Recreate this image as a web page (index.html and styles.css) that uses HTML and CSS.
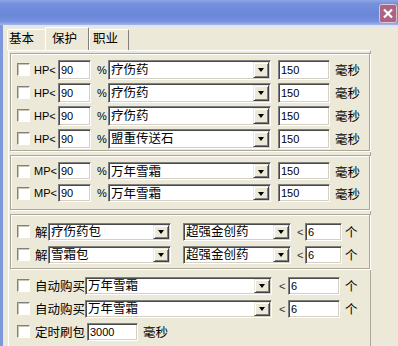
FILE: index.html
```html
<!DOCTYPE html>
<html lang="zh-CN">
<head>
  <meta charset="UTF-8">
  <meta name="viewport" content="width=device-width, initial-scale=1.0">
  <title>保护</title>
  <link rel="stylesheet" href="styles.css">
</head>
<body>
  <div class="window">
    <div class="titlebar">
      <span class="close">
        <svg width="18" height="19" viewBox="0 0 18 19">
          <rect x="0.5" y="0.5" width="17" height="18" rx="2" fill="#ab6483" stroke="#dcc6d3"/>
          <path d="M5 5.5 L13 13.5 M13 5.5 L5 13.5" stroke="#fff" stroke-width="2.2"/>
        </svg>
      </span>
    </div>
    <div class="frame">
      <div class="tabs">
        <span class="tab tab-first">基本</span>
        <span class="tab active">保护</span>
        <span class="tab tab-last">职业</span>
      </div>
      <div class="page">
        <!-- HP -->
        <div class="group hp">
          <div class="row"><span class="check"></span><span class="lbl">HP&lt;</span><span class="edit w-pct">90</span><span class="pct">%</span><span class="combo w-item"><span class="val">疗伤药</span><span class="drop"></span></span><span class="edit w-ms">150</span><span class="unit">毫秒</span></div>
          <div class="row"><span class="check"></span><span class="lbl">HP&lt;</span><span class="edit w-pct">90</span><span class="pct">%</span><span class="combo w-item"><span class="val">疗伤药</span><span class="drop"></span></span><span class="edit w-ms">150</span><span class="unit">毫秒</span></div>
          <div class="row"><span class="check"></span><span class="lbl">HP&lt;</span><span class="edit w-pct">90</span><span class="pct">%</span><span class="combo w-item"><span class="val">疗伤药</span><span class="drop"></span></span><span class="edit w-ms">150</span><span class="unit">毫秒</span></div>
          <div class="row"><span class="check"></span><span class="lbl">HP&lt;</span><span class="edit w-pct">90</span><span class="pct">%</span><span class="combo w-item"><span class="val">盟重传送石</span><span class="drop"></span></span><span class="edit w-ms">150</span><span class="unit">毫秒</span></div>
        </div>
        <!-- MP -->
        <div class="group mp">
          <div class="row"><span class="check"></span><span class="lbl">MP&lt;</span><span class="edit w-pct">90</span><span class="pct">%</span><span class="combo w-item"><span class="val">万年雪霜</span><span class="drop"></span></span><span class="edit w-ms">150</span><span class="unit">毫秒</span></div>
          <div class="row"><span class="check"></span><span class="lbl">MP&lt;</span><span class="edit w-pct">90</span><span class="pct">%</span><span class="combo w-item"><span class="val">万年雪霜</span><span class="drop"></span></span><span class="edit w-ms">150</span><span class="unit">毫秒</span></div>
        </div>
        <!-- 解包 -->
        <div class="group unpack">
          <div class="row"><span class="check"></span><span class="txt">解</span><span class="combo w-pack"><span class="val">疗伤药包</span><span class="drop"></span></span><span class="combo w-drug"><span class="val">超强金创药</span><span class="drop"></span></span><span class="lt">&lt;</span><span class="edit w-cnt">6</span><span class="unit">个</span></div>
          <div class="row"><span class="check"></span><span class="txt">解</span><span class="combo w-pack"><span class="val">雪霜包</span><span class="drop"></span></span><span class="combo w-drug"><span class="val">超强金创药</span><span class="drop"></span></span><span class="lt">&lt;</span><span class="edit w-cnt">6</span><span class="unit">个</span></div>
        </div>
        <!-- 自动购买 / 定时刷包 -->
        <div class="loose">
          <div class="row"><span class="check"></span><span class="txt w-word">自动购买</span><span class="combo w-buy"><span class="val">万年雪霜</span><span class="drop"></span></span><span class="lt">&lt;</span><span class="edit w-num">6</span><span class="unit">个</span></div>
          <div class="row"><span class="check"></span><span class="txt w-word">自动购买</span><span class="combo w-buy"><span class="val">万年雪霜</span><span class="drop"></span></span><span class="lt">&lt;</span><span class="edit w-num">6</span><span class="unit">个</span></div>
          <div class="row"><span class="check"></span><span class="txt w-word2">定时刷包</span><span class="edit w-time">3000</span><span class="unit">毫秒</span></div>
        </div>
      </div>
    </div>
  </div>
</body>
</html>
```

FILE: styles.css
```css
* {
  box-sizing: border-box;
}
body {
  margin: 0;
  background: #ece9d8;
  font-family: "Noto Sans CJK SC", "Noto Sans", sans-serif;
  font-size: 12px;
  color: #000;
}
.window {
  width: 398px;
  height: 346px;
  overflow: hidden;
  background: #ece9d8;
}

/* title bar */
.titlebar {
  height: 25px;
  background: linear-gradient(#8ea5e4 0, #7590dc 15%, #6a86d7 60%, #7590dc 85%, #a2b5ea 100%);
  display: flex;
  justify-content: flex-end;
  padding: 4px 1px 0 0;
}
.close svg {
  display: block;
}

.frame {
  border-left: 3px solid #7f97dd;
  height: 321px;
  padding-left: 4px;
}

/* tabs */
.tabs {
  height: 25px;
  border-top: 2px solid #e2e3ee;
  display: flex;
  align-items: flex-end;
  font-size: 12.5px;
}
.tab {
  height: 21px;
  line-height: 16px;
  border-top: 1px solid #fff;
  border-left: 1px solid #fff;
  border-right: 1px solid #808080;
  border-radius: 2px 2px 0 0;
}
.tab-first {
  width: 38px;
  padding-left: 1px;
  border-right: none;
}
.tab.active {
  height: 23px;
  line-height: 20px;
  width: 44px;
  padding-left: 6px;
}
.tab-last {
  width: 40px;
  padding-left: 3px;
}

/* page */
.page {
  margin-left: 1px;
  width: 363px;
  height: 296px;
  border-top: 1px solid #fff;
  border-left: 1px solid #fff;
  border-right: 1px solid #aca899;
  padding: 2px 0 0 1px;
}
.group {
  border: 1px solid #aca899;
  box-shadow: inset 1px 1px 0 #fff, 1px 1px 0 #fff;
  padding: 4px 0 0 6px;
}
.group + .group {
  margin-top: 4px;
}
.mp {
  padding-bottom: 5px;
}
.unpack {
  padding-top: 5px;
  padding-bottom: 2px;
}
.loose {
  margin-top: 5px;
  padding-left: 7px;
}

/* rows */
.row {
  display: flex;
  align-items: center;
  height: 23px;
}
.mp .row {
  height: 22px;
}

.check {
  width: 13px;
  height: 13px;
  background: #fff;
  border: 1px solid;
  border-color: #808080 #fff #fff #808080;
  box-shadow: inset 1px 1px 0 #c9c6b8;
}
.edit,
.combo {
  height: 18px;
  background: #fff;
  border: 1px solid;
  border-color: #7f7f7f #fff #fff #7f7f7f;
  box-shadow: inset 1px 1px 0 #4a4a4a, inset -1px -1px 0 #d4d0c8;
}
.hp .edit,
.hp .combo {
  height: 20px;
}
.edit {
  display: flex;
  align-items: center;
  padding-left: 2px;
  font-family: "Liberation Sans", Arial, sans-serif;
  font-size: 11px;
}
.combo {
  display: flex;
  align-items: center;
  padding: 1px;
}
.combo .val {
  flex: 1;
  padding-left: 1px;
  font-size: 12.5px;
  line-height: 1;
  white-space: nowrap;
}
.drop {
  width: 16px;
  height: 100%;
  background: #ece9d8;
  border: 1px solid;
  border-color: #ece9d8 #404040 #404040 #ece9d8;
  box-shadow: inset 1px 1px 0 #fff, inset -1px -1px 0 #808080;
  display: flex;
  align-items: center;
  justify-content: center;
}
.drop::after {
  content: "";
  margin-top: 1px;
  border-top: 4px solid #000;
  border-left: 3px solid transparent;
  border-right: 3px solid transparent;
}

.lbl,
.pct,
.lt {
  font-family: "Liberation Sans", Arial, sans-serif;
  font-size: 11px;
}
.lbl {
  margin-left: 4px;
  width: 24px;
}
.pct {
  margin-left: 6px;
  width: 11px;
}
.txt {
  margin-left: 5px;
  width: 13px;
  font-size: 12.5px;
}
.w-word {
  width: 50px;
  white-space: nowrap;
}
.w-word2 {
  width: 52px;
  white-space: nowrap;
}
.lt {
  margin-left: 6px;
  width: 8px;
  color: #333;
}
.loose .lt {
  margin-left: 7px;
  width: 9px;
}
.unit {
  margin-left: 5px;
  font-size: 12.5px;
}
.unpack .unit {
  margin-left: 3px;
}

.w-pct { width: 33px; }
.w-item { width: 163px; }
.w-ms { width: 52px; margin-left: 7px; }
.w-pack { width: 123px; }
.w-drug { width: 108px; margin-left: 12px; }
.w-cnt { width: 37px; }
.w-buy { width: 187px; }
.w-num { width: 52px; }
.w-time { width: 51px; }
```
